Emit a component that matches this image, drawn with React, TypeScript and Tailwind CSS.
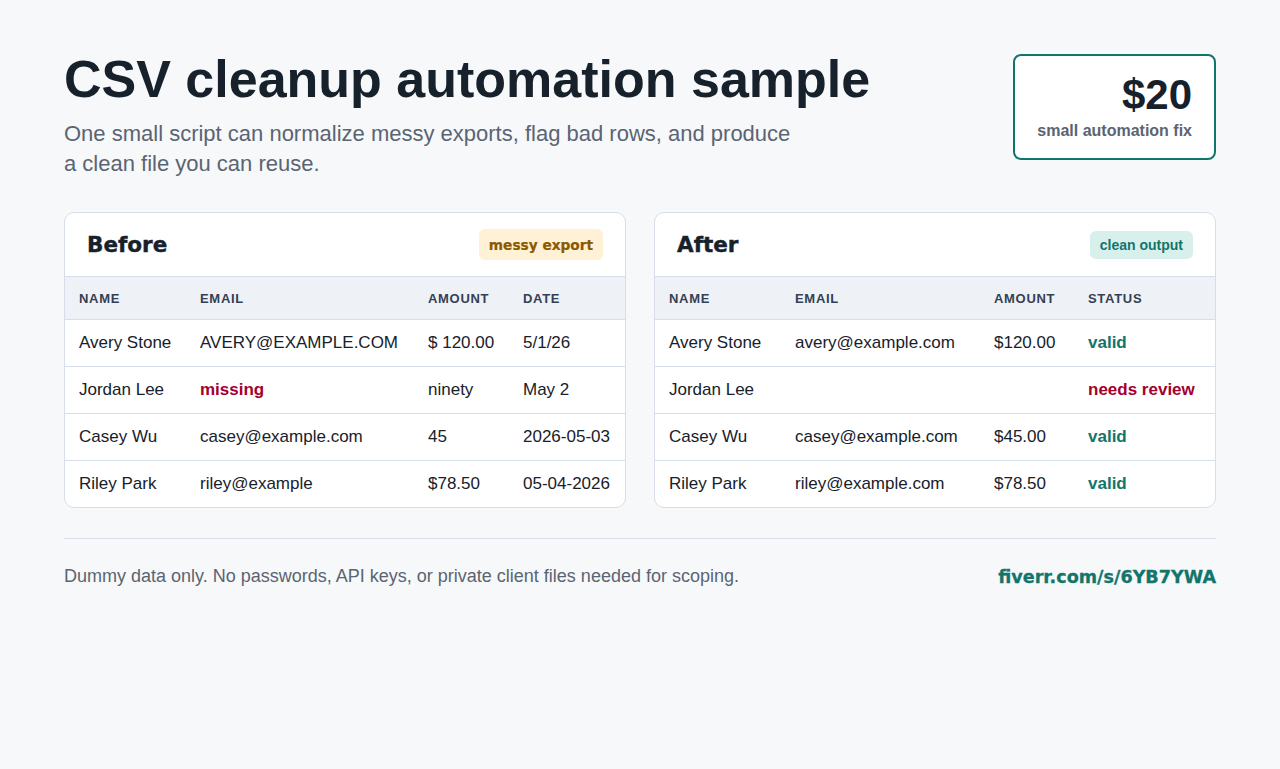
const beforeRows = [
  ['Avery Stone', 'AVERY@EXAMPLE.COM', '$ 120.00', '5/1/26'],
  ['Jordan Lee', 'missing', 'ninety', 'May 2'],
  ['Casey Wu', 'casey@example.com', '45', '2026-05-03'],
  ['Riley Park', 'riley@example', '$78.50', '05-04-2026'],
];

const afterRows = [
  ['Avery Stone', 'avery@example.com', '$120.00', 'valid'],
  ['Jordan Lee', '', '', 'needs review'],
  ['Casey Wu', 'casey@example.com', '$45.00', 'valid'],
  ['Riley Park', 'riley@example.com', '$78.50', 'valid'],
];

function Th({ children, className }: { children: string; className: string }) {
  return (
    <th className={`h-[42px] px-[14px] pt-px text-left text-[13px] font-bold tracking-[0.7px] text-[#344054] border-b border-[#d8dee9] ${className}`}>
      {children}
    </th>
  );
}

export default function App() {
  return (
    <div className="min-h-[769px] bg-[#f7f8fa] px-16 pt-[54px] font-['Liberation_Sans',Arial,sans-serif] text-[#17212b]">
      <header className="flex justify-between items-start">
        <div>
          <h1 className="text-[52px] leading-[50px] font-bold">CSV cleanup automation sample</h1>
          <p className="mt-[15px] w-[740px] text-[22px] leading-[30px] text-[#5a6472]">
            One small script can normalize messy exports, flag bad rows, and produce a clean file you can reuse.
          </p>
        </div>
        <div className="w-[203px] h-[106px] rounded-lg border-2 border-[#12756b] bg-white px-[22px] pt-[15px] text-right">
          <div className="text-[42px] leading-[48px] font-bold">$20</div>
          <div className="mt-[2px] text-[16px] leading-[20px] font-bold text-[#5a6472]">small automation fix</div>
        </div>
      </header>

      <main className="mt-[33px] grid grid-cols-2 gap-7">
        <section className="rounded-[10px] border border-[#d8dee9] bg-white overflow-hidden">
          <div className="flex h-[64px] items-center justify-between px-[22px] border-b border-[#d8dee9]">
            <h2 className="pt-[2px] font-['DejaVu_Sans',sans-serif] text-[21.5px] font-bold [-webkit-text-stroke:0.4px]">Before</h2>
            <span className="rounded-md bg-[#fff1d6] pl-[10px] pr-[10px] pt-[7px] pb-[5px] font-['DejaVu_Sans',sans-serif] text-[13.7px] leading-[19px] font-bold [-webkit-text-stroke:0.2px] text-[#8a5a00]">messy export</span>
          </div>
          <table className="w-full border-collapse text-[17px]">
            <thead className="bg-[#eef2f7]">
              <tr>
                <Th className="w-[121px]">NAME</Th>
                <Th className="w-[228px]">EMAIL</Th>
                <Th className="w-[95px]">AMOUNT</Th>
                <Th className="">DATE</Th>
              </tr>
            </thead>
            <tbody>
              {beforeRows.map((r, i) => (
                <tr key={r[0]} className={i < 3 ? 'border-b border-[#d8dee9]' : ''}>
                  <td className="h-[47px] px-[14px]">{r[0]}</td>
                  <td className={`px-[14px] ${r[1] === 'missing' ? 'font-bold text-[#a4002f]' : ''}`}>{r[1]}</td>
                  <td className="px-[14px]">{r[2]}</td>
                  <td className="px-[14px]">{r[3]}</td>
                </tr>
              ))}
            </tbody>
          </table>
        </section>

        <section className="rounded-[10px] border border-[#d8dee9] bg-white overflow-hidden">
          <div className="flex h-[64px] items-center justify-between px-[22px] border-b border-[#d8dee9]">
            <h2 className="pt-[2px] font-['DejaVu_Sans',sans-serif] text-[21.5px] font-bold [-webkit-text-stroke:0.4px]">After</h2>
            <span className="rounded-md bg-[#d8f0ec] px-[10px] py-[6px] text-[14px] leading-[16px] font-bold text-[#12756b]">clean output</span>
          </div>
          <table className="w-full border-collapse text-[17px]">
            <thead className="bg-[#eef2f7]">
              <tr>
                <Th className="w-[126px]">NAME</Th>
                <Th className="w-[199px]">EMAIL</Th>
                <Th className="w-[94px]">AMOUNT</Th>
                <Th className="">STATUS</Th>
              </tr>
            </thead>
            <tbody>
              {afterRows.map((r, i) => (
                <tr key={r[0]} className={i < 3 ? 'border-b border-[#d8dee9]' : ''}>
                  <td className="h-[47px] px-[14px]">{r[0]}</td>
                  <td className="px-[14px]">{r[1]}</td>
                  <td className="px-[14px]">{r[2]}</td>
                  <td className={`px-[14px] font-bold ${r[3] === 'valid' ? 'text-[#12756b]' : 'text-[#a4002f]'}`}>{r[3]}</td>
                </tr>
              ))}
            </tbody>
          </table>
        </section>
      </main>

      <footer className="mt-[30px] flex items-start justify-between border-t border-[#d8dee9] pt-[26px]">
        <p className="text-[18px] leading-[22px] text-[#5a6472]">Dummy data only. No passwords, API keys, or private client files needed for scoping.</p>
        <span className="pt-px font-['DejaVu_Sans',sans-serif] text-[17.6px] leading-[22px] font-bold [-webkit-text-stroke:0.3px] text-[#12756b]">fiverr.com/s/6YB7YWA</span>
      </footer>
    </div>
  );
}
